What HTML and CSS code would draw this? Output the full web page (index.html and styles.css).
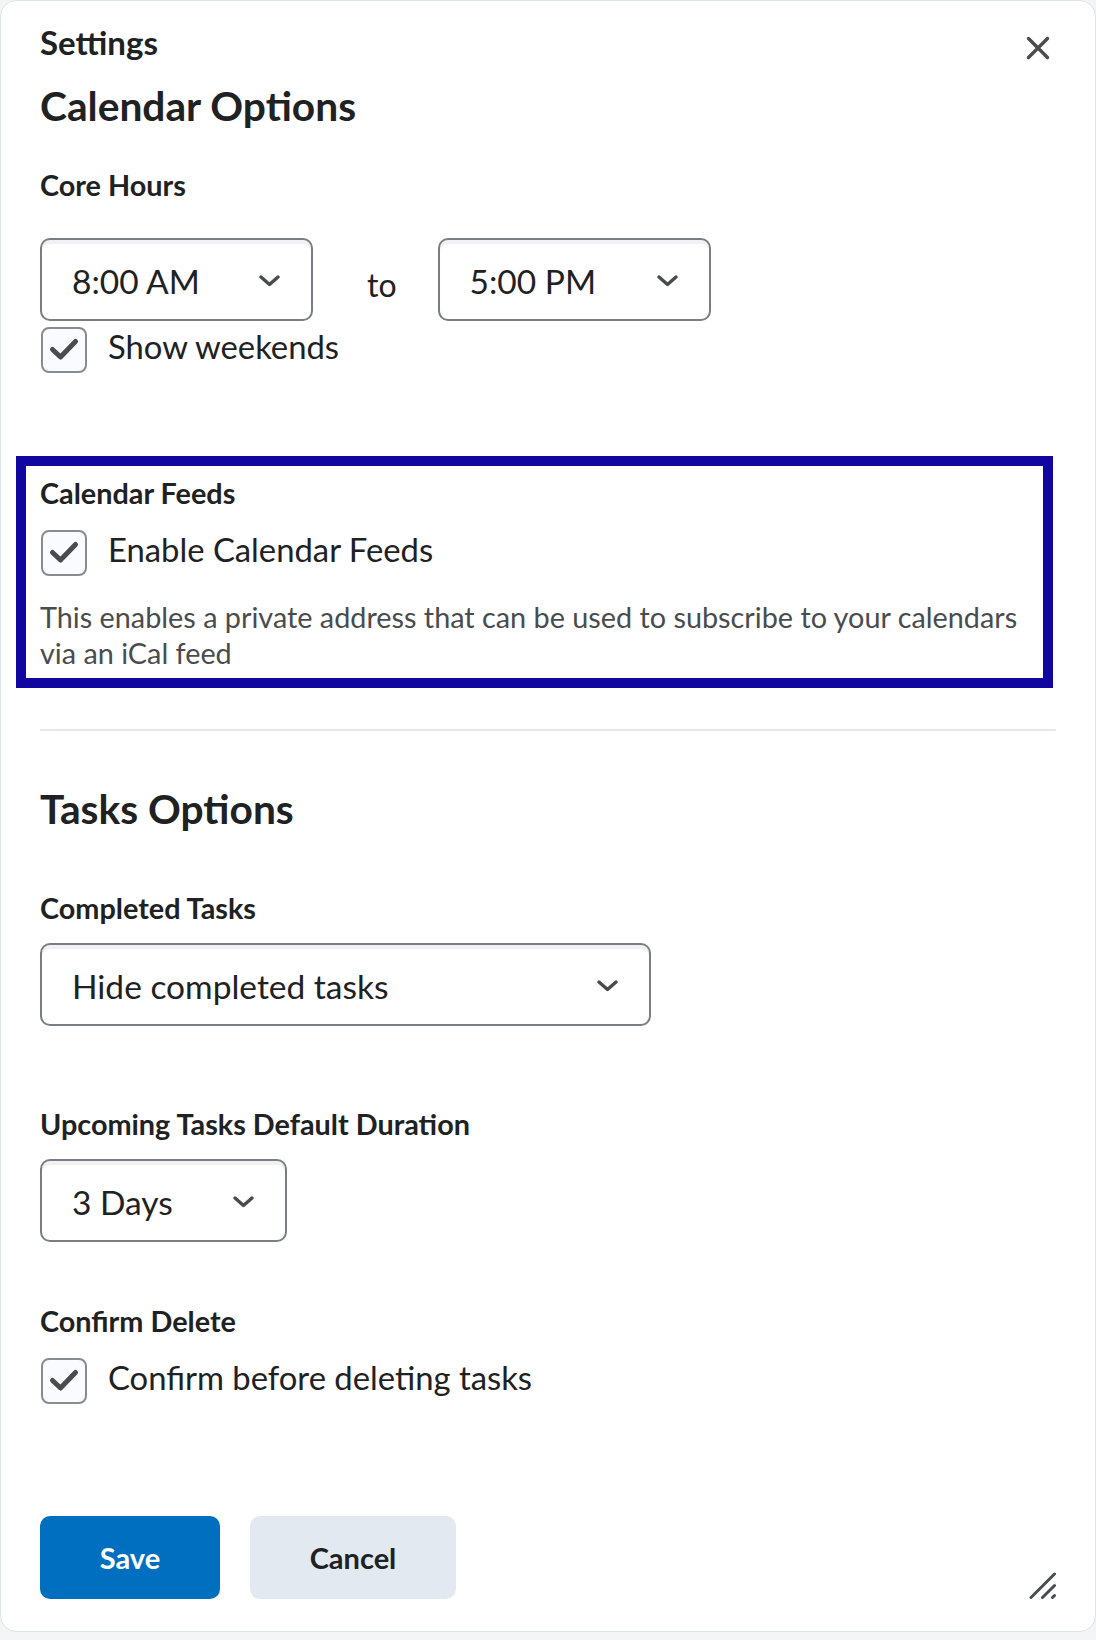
FILE: index.html
```html
<!DOCTYPE html>
<html lang="en">
<head>
<meta charset="utf-8">
<title>Settings</title>
<link rel="stylesheet" href="styles.css">
</head>
<body>
<div class="dialog">
  <header class="dialog-header">
    <h1 class="dialog-title">Settings</h1>
    <button class="close-btn" aria-label="Close">
      <svg width="24" height="24" viewBox="0 0 24 24"><path d="M2.5 2.5 L21.5 21.5 M21.5 2.5 L2.5 21.5" stroke="#494c4e" stroke-width="3.4" stroke-linecap="round" fill="none"/></svg>
    </button>
  </header>

  <section class="calendar-section">
    <h2 class="section-title calendar-title">Calendar Options</h2>
    <div class="label core-label">Core Hours</div>
    <div class="time-row">
      <div class="select select-time">
        <span class="select-text">8:00 AM</span>
        <svg class="chevron" width="21" height="12" viewBox="0 0 21 12"><path d="M2 2 L10.5 9.5 L19 2" stroke="#494c4e" stroke-width="3.4" stroke-linecap="round" stroke-linejoin="round" fill="none"/></svg>
      </div>
      <span class="to">to</span>
      <div class="select select-time">
        <span class="select-text">5:00 PM</span>
        <svg class="chevron" width="21" height="12" viewBox="0 0 21 12"><path d="M2 2 L10.5 9.5 L19 2" stroke="#494c4e" stroke-width="3.4" stroke-linecap="round" stroke-linejoin="round" fill="none"/></svg>
      </div>
    </div>
    <div class="check-row weekends-row">
      <span class="checkbox"><svg width="42" height="42" viewBox="0 0 42 42"><path d="M9.5 20.5 L17.5 28 L32.5 12.5" stroke="#494c4e" stroke-width="5" stroke-linecap="round" stroke-linejoin="round" fill="none"/></svg></span>
      <span class="check-text">Show weekends</span>
    </div>

    <div class="feeds-box">
      <div class="label">Calendar Feeds</div>
      <div class="check-row feeds-row">
        <span class="checkbox"><svg width="42" height="42" viewBox="0 0 42 42"><path d="M9.5 20.5 L17.5 28 L32.5 12.5" stroke="#494c4e" stroke-width="5" stroke-linecap="round" stroke-linejoin="round" fill="none"/></svg></span>
        <span class="check-text">Enable Calendar Feeds</span>
      </div>
      <p class="desc">This enables a private address that can be used to subscribe to your calendars via an iCal feed</p>
    </div>
  </section>

  <hr class="divider">

  <section class="tasks-section">
    <h2 class="section-title tasks-title">Tasks Options</h2>
    <div class="label completed-label">Completed Tasks</div>
    <div class="select select-wide">
      <span class="select-text">Hide completed tasks</span>
      <svg class="chevron" width="21" height="12" viewBox="0 0 21 12"><path d="M2 2 L10.5 9.5 L19 2" stroke="#494c4e" stroke-width="3.4" stroke-linecap="round" stroke-linejoin="round" fill="none"/></svg>
    </div>
    <div class="label upcoming-label">Upcoming Tasks Default Duration</div>
    <div class="select select-days">
      <span class="select-text">3 Days</span>
      <svg class="chevron" width="21" height="12" viewBox="0 0 21 12"><path d="M2 2 L10.5 9.5 L19 2" stroke="#494c4e" stroke-width="3.4" stroke-linecap="round" stroke-linejoin="round" fill="none"/></svg>
    </div>
    <div class="label confirm-label">Confirm Delete</div>
    <div class="check-row confirm-row">
      <span class="checkbox"><svg width="42" height="42" viewBox="0 0 42 42"><path d="M9.5 20.5 L17.5 28 L32.5 12.5" stroke="#494c4e" stroke-width="5" stroke-linecap="round" stroke-linejoin="round" fill="none"/></svg></span>
      <span class="check-text">Confirm before deleting tasks</span>
    </div>
  </section>

  <footer class="dialog-footer">
    <button class="btn btn-primary">Save</button>
    <button class="btn btn-secondary">Cancel</button>
    <svg class="grip" width="27" height="27" viewBox="0 0 27 27"><path d="M2 25.5 L25.5 2 M13.5 25.5 L25.5 13.5 M23.5 25.5 L25.5 23.5" stroke="#494c4e" stroke-width="3" stroke-linecap="round" fill="none"/></svg>
  </footer>
</div>
</body>
</html>
```

FILE: styles.css
```css
* {
  box-sizing: border-box;
}

html,
body {
  margin: 0;
  padding: 0;
}

body {
  width: 1096px;
  background: #f4f5f7;
  font-family: Lato, "Open Sans", "Liberation Sans", sans-serif;
  color: #202122;
}

.dialog {
  width: 1096px;
  background: #ffffff;
  border: 1px solid #dde2e7;
  border-radius: 16px;
  padding: 21px 39px 32px;
}

.dialog-header {
  display: flex;
  justify-content: space-between;
  align-items: flex-start;
}

.dialog-title {
  margin: 0;
  font-size: 33px;
  line-height: 40px;
  font-weight: 700;
}

.close-btn {
  display: block;
  width: 24px;
  height: 24px;
  margin: 14px 6px 0 0;
  padding: 0;
  border: 0;
  background: none;
}

.close-btn svg {
  display: block;
}

.section-title {
  margin: 0;
  font-size: 40.7px;
  line-height: 48px;
  font-weight: 700;
}

.calendar-title {
  margin-top: 20px;
}

.tasks-title {
  margin-top: 52px;
}

.label {
  font-size: 28.8px;
  line-height: 32px;
  font-weight: 700;
}

.core-label {
  margin-top: 39px;
}

.completed-label {
  margin-top: 59px;
}

.upcoming-label {
  margin-top: 82px;
}

.confirm-label {
  margin-top: 63px;
}

.time-row {
  display: flex;
  align-items: flex-start;
  margin-top: 37px;
}

.select {
  display: flex;
  align-items: center;
  justify-content: space-between;
  height: 83px;
  padding: 2px 31px 0 30px;
  border: 2px solid #7a7e82;
  border-radius: 10px;
  background: #ffffff;
  box-shadow: inset 0 4px 0 0 rgba(177, 185, 190, 0.2);
  font-size: 33.5px;
  line-height: 40px;
  color: #202122;
}

.chevron {
  display: block;
  flex: none;
}

.select-time {
  width: 273px;
}

.select-wide {
  width: 611px;
  margin-top: 19px;
}

.select-days {
  width: 247px;
  margin-top: 19px;
}

.to {
  margin: 27px 41px 0 54px;
  font-size: 32px;
  line-height: 40px;
}

.check-row {
  display: flex;
  align-items: flex-start;
  gap: 21px;
}

.weekends-row {
  margin-top: 4px;
}

.feeds-row {
  margin-top: 19px;
}

.confirm-row {
  margin-top: 19px;
}

.checkbox {
  flex: none;
  display: flex;
  align-items: center;
  justify-content: center;
  width: 46px;
  height: 46px;
  margin: 2px 0 0 1px;
  border: 2px solid #868c8f;
  border-radius: 8px;
  background: #f9fbff;
}

.checkbox svg {
  display: block;
}

.check-text {
  margin-top: 2px;
  font-size: 32.8px;
  line-height: 40px;
}

.feeds-box {
  margin: 83px 3px 0 -24px;
  border: 10px solid #11069f;
  padding: 11px 0 7px 14px;
}

.desc {
  margin: 23px 0 0;
  font-size: 28.8px;
  line-height: 36px;
  color: #494c4e;
}

.divider {
  margin: 41px 0 0;
  height: 0;
  border: 0;
  border-top: 2px solid #e3e9f1;
}

.tasks-section {
  padding-top: 2px;
}

.dialog-footer {
  display: flex;
  align-items: flex-end;
  margin-top: 112px;
}

.btn {
  height: 83px;
  padding: 0;
  border: 0;
  border-radius: 10px;
  font-family: inherit;
  font-size: 29px;
  line-height: 36px;
  font-weight: 700;
  text-align: center;
}

.btn-primary {
  width: 180px;
  background: #006fbf;
  color: #ffffff;
}

.btn-secondary {
  width: 206px;
  margin-left: 30px;
  background: #e3e9f1;
  color: #202122;
}

.grip {
  display: block;
  margin-left: auto;
  margin-right: 0;
}
```
